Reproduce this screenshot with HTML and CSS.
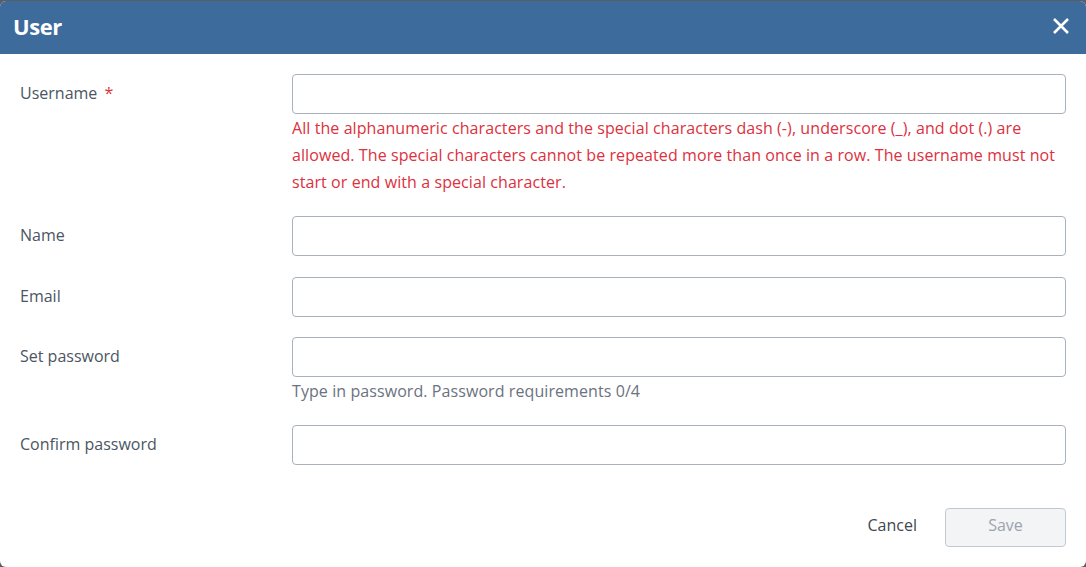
FILE: index.html
```html
<!DOCTYPE html>
<html>
<head>
<meta charset="utf-8">
<link rel="stylesheet" href="styles.css">
</head>
<body>
<div class="dialog">
  <div class="header">
    <span class="title">User</span>
    <button class="close" aria-label="Close">
      <svg width="18" height="18" viewBox="0 0 18 18"><path d="M2 2L16 16M16 2L2 16" stroke="#fff" stroke-width="2.6" stroke-linecap="butt"/></svg>
    </button>
  </div>
  <div class="body">
    <div class="row">
      <label class="label">Username <span class="req">*</span></label>
      <div class="field">
        <input class="input" type="text">
        <div class="error">All the alphanumeric characters and the special characters dash (-), underscore (_), and dot (.) are allowed. The special characters cannot be repeated more than once in a row. The username must not start or end with a special character.</div>
      </div>
    </div>
    <div class="row">
      <label class="label">Name</label>
      <div class="field"><input class="input" type="text"></div>
    </div>
    <div class="row row-gap-extra">
      <label class="label">Email</label>
      <div class="field"><input class="input" type="text"></div>
    </div>
    <div class="row">
      <label class="label">Set password</label>
      <div class="field">
        <input class="input" type="password">
        <div class="help">Type in password. Password requirements 0/4</div>
      </div>
    </div>
    <div class="row">
      <label class="label">Confirm password</label>
      <div class="field"><input class="input" type="password"></div>
    </div>
  </div>
  <div class="footer">
    <button class="btn-cancel">Cancel</button>
    <button class="btn-save" disabled>Save</button>
  </div>
</div>
</body>
</html>
```
FILE: styles.css
```css
* { box-sizing: border-box; }
html, body { margin: 0; padding: 0; }
body {
  background: #5b5d60;
  font-family: "Open Sans", "Liberation Sans", sans-serif;
  height: 567px;
  overflow: hidden;
}
.dialog {
  margin-top: 1px;
  height: 566px;
  background: #fff;
  border-radius: 6px;
  overflow: hidden;
  display: flex;
  flex-direction: column;
}
.header {
  height: 53px;
  background: #3d6b9c;
  display: flex;
  align-items: center;
  justify-content: space-between;
  padding: 0 16px 3px 13px;
}
.title {
  color: #fff;
  font-weight: 700;
  font-size: 22px;
  letter-spacing: -0.4px;
}
.close {
  background: none;
  border: 0;
  padding: 0;
  width: 18px;
  height: 18px;
  display: flex;
  cursor: pointer;
}
.body {
  padding: 20px 20px 0 20px;
  display: flex;
  flex-direction: column;
  gap: 20px;
}
.row {
  display: flex;
}
.row-gap-extra { margin-top: 1px; }
.label {
  width: 272px;
  flex: none;
  font-size: 16px;
  color: #4b5563;
  padding-top: 8px;
  line-height: 22px;
}
.req { color: #e0313d; margin-left: 3px; }
.field { flex: 1; }
.input {
  display: block;
  width: 100%;
  height: 40px;
  border: 1px solid #a9b1bb;
  border-radius: 4px;
  background: #fff;
  font-family: inherit;
  font-size: 16px;
}
.error {
  color: #dc3140;
  font-size: 16px;
  line-height: 27px;
  margin-top: 1px;
  letter-spacing: 0.08px;
}
.help {
  color: #6b7280;
  font-size: 16px;
  line-height: 27px;
  margin-top: 1px;
  letter-spacing: 0.08px;
}
.footer {
  margin-top: auto;
  display: flex;
  justify-content: flex-end;
  align-items: center;
  gap: 16px;
  padding: 0 20px 20px 20px;
}
.btn-cancel {
  background: none;
  border: 0;
  font-family: inherit;
  font-size: 16px;
  line-height: 22px;
  color: #3f4753;
  padding: 4px 12px;
  margin-bottom: 6px;
}
.btn-save {
  width: 121px;
  height: 39px;
  background: #f3f4f6;
  border: 1px solid #c2c8cf;
  border-radius: 4px;
  font-family: inherit;
  font-size: 16px;
  color: #9ca3ad;
  padding: 0 0 6px 0;
}
```
